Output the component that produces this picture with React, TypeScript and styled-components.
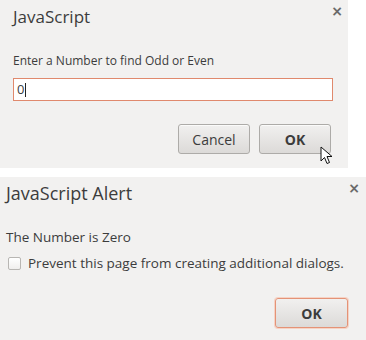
import styled, { createGlobalStyle } from 'styled-components';

const Global = createGlobalStyle`
  html, body {
    margin: 0;
    padding: 0;
    background: #ffffff;
  }
  body {
    font-family: "Open Sans", "DejaVu Sans", sans-serif;
    color: #3c3c3c;
  }
`;

const Page = styled.div`
  width: 366px;
  height: 340px;
  overflow: hidden;
  display: flex;
  flex-direction: column;
  gap: 9px;
`;

const Dialog = styled.div<{ $width: number; $height: number; $pad: number }>`
  position: relative;
  width: ${(p) => p.$width}px;
  height: ${(p) => p.$height}px;
  box-sizing: border-box;
  background: #f2f1f0;
  padding: 0 ${(p) => p.$pad}px;
  display: flex;
  flex-direction: column;
`;

const Title = styled.div<{ $top: number; $size: number }>`
  font-size: ${(p) => p.$size}px;
  color: #3c3c3c;
  margin-top: ${(p) => p.$top}px;
  line-height: 20px;
  height: 20px;
`;

const Close = styled.div<{ $top: number; $right: number }>`
  position: absolute;
  top: ${(p) => p.$top}px;
  right: ${(p) => p.$right}px;
  font-size: 14px;
  font-weight: bold;
  color: #6a6a6a;
  line-height: 12px;
  font-family: "DejaVu Sans", sans-serif;
`;

const Text = styled.div<{ $top: number; $size?: number }>`
  font-size: ${(p) => p.$size ?? 13.5}px;
  line-height: 18px;
  margin-top: ${(p) => p.$top}px;
  color: #3c3c3c;
`;

const Input = styled.div`
  margin-top: 8px;
  margin-right: 2px;
  height: 23px;
  box-sizing: border-box;
  border: 1px solid #e0896d;
  background: #ffffff;
  font-size: 13px;
  line-height: 21px;
  padding-left: 3px;
  display: flex;
  align-items: center;
`;

const Caret = styled.span`
  display: inline-block;
  width: 1px;
  height: 14px;
  background: #222;
  margin-left: 1px;
`;

const Buttons = styled.div<{ $top: number; $right: number }>`
  margin-top: ${(p) => p.$top}px;
  padding-right: ${(p) => p.$right}px;
  display: flex;
  justify-content: flex-end;
  gap: 9px;
`;

const Button = styled.div<{ $bold?: boolean; $focus?: boolean; $width: number }>`
  position: relative;
  width: ${(p) => p.$width}px;
  height: 30px;
  box-sizing: border-box;
  border-radius: 3px;
  border: 1px solid ${(p) => (p.$focus ? '#e49377' : '#adaba8')};
  box-shadow: ${(p) => (p.$focus ? '0 0 0 1px #f6d3c5' : 'inset 0 1px 0 #fbfbfa')};
  background: linear-gradient(#f1f0ef, #dcdad8);
  display: flex;
  align-items: center;
  justify-content: center;
  font-size: 14px;
  font-weight: ${(p) => (p.$bold ? 700 : 400)};
  color: #3c3c3c;
`;

const Pointer = styled.svg`
  position: absolute;
  left: 60px;
  top: 21px;
`;

const CheckRow = styled.div`
  margin-top: 8px;
  display: flex;
  align-items: center;
  gap: 7px;
  padding-left: 2px;
`;

const Box = styled.div`
  width: 13px;
  height: 13px;
  box-sizing: border-box;
  border: 1px solid #b8b6b3;
  border-radius: 2px;
  background: linear-gradient(#ffffff, #f0efee);
`;

export default function App() {
  return (
    <Page>
      <Global />
      <Dialog $width={348} $height={168} $pad={13}>
        <Close $top={5} $right={5}>×</Close>
        <Title $top={7} $size={17}>JavaScript</Title>
        <Text $top={25} $size={12}>Enter a Number to find Odd or Even</Text>
        <Input>
          0<Caret />
        </Input>
        <Buttons $top={23} $right={4}>
          <Button $width={72}>Cancel</Button>
          <Button $width={72} $bold>
            OK
            <Pointer width="14" height="20" viewBox="0 0 14 20">
              <path
                d="M1 1 L1 15 L4.5 11.5 L7 17.5 L9.5 16.5 L7 10.5 L12 10.5 Z"
                fill="#ffffff"
                stroke="#111111"
                strokeWidth="1"
                strokeLinejoin="round"
              />
            </Pointer>
          </Button>
        </Buttons>
      </Dialog>
      <Dialog $width={366} $height={163} $pad={6}>
        <Close $top={5} $right={6}>×</Close>
        <Title $top={6} $size={18}>JavaScript Alert</Title>
        <Text $top={25}>The Number is Zero</Text>
        <CheckRow>
          <Box />
          <Text $top={0}>Prevent this page from creating additional dialogs.</Text>
        </CheckRow>
        <Buttons $top={26} $right={12}>
          <Button $width={73} $bold $focus>OK</Button>
        </Buttons>
      </Dialog>
    </Page>
  );
}
